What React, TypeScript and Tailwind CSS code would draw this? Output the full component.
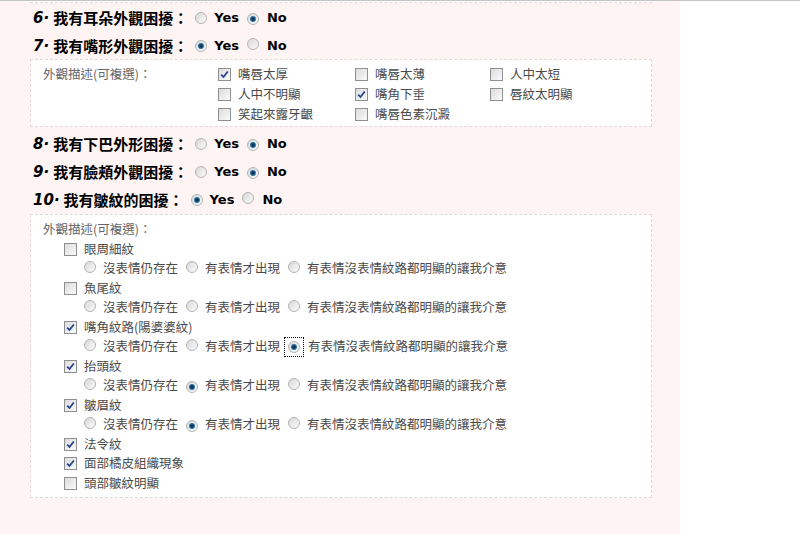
import React from "react"

const cjk = "font-['Noto_Sans_CJK_TC','Noto_Sans',sans-serif]"

function Radio({ checked = false }: { checked?: boolean }) {
    return <span className="inline-flex items-center justify-center w-[12px] h-[12px] rounded-full border border-[#b4b4b4] bg-[linear-gradient(135deg,#d8d8d8,#fbfbfb)] shrink-0">
        {checked && <span className="w-[6px] h-[6px] rounded-full bg-[radial-gradient(circle,#0c3558_25%,#3f8fc8_80%)]" />}
    </span>
}

function Check({ checked = false }: { checked?: boolean }) {
    return <span className="inline-flex items-center justify-center w-[13px] h-[13px] border border-[#8e8f8f] bg-[linear-gradient(135deg,#dcdcdc,#fafafa)] shrink-0">
        {checked && <svg width="9" height="9" viewBox="0 0 9 9">
            <path d="M1.2 4.6 L3.5 7 L7.8 1.5" fill="none" stroke="#25408f" strokeWidth="1.8" />
        </svg>}
    </span>
}

function Question({ num, text, yes }: { num: string; text: string; yes: boolean }) {
    return <div className="h-[28px] flex items-center pl-[33px] pt-[2px] text-black">
        <span className="font-['DejaVu_Sans'] italic font-bold text-[15px]">{num}·</span>
        <span className={`${cjk} font-bold text-[15px] ml-[4px]`}>{text}：</span>
        <span className="ml-[7px] flex items-center font-['DejaVu_Sans'] font-bold text-[13px]">
            <Radio checked={yes} />
            <span className="ml-[7px]">Yes</span>
            <span className="ml-[8px]"><Radio checked={!yes} /></span>
            <span className="ml-[8px]">No</span>
        </span>
    </div>
}

function CheckItem({ label, checked, tall }: { label: string; checked?: boolean; tall?: boolean }) {
    return <div className={`${tall ? "h-[20px]" : "h-[19.5px]"} flex items-center`}>
        <Check checked={checked} />
        <span className="ml-[7px]">{label}</span>
    </div>
}

const levels = ["沒表情仍存在", "有表情才出現", "有表情沒表情紋路都明顯的讓我介意"]

function Levels({ pick, focus }: { pick?: number; focus?: boolean }) {
    return <div className="h-[19.5px] flex items-center pl-[20px]">
        {levels.map((l, i) => (
            <span key={l} className="flex items-center">
                {focus && i === 2
                    ? <span className="ml-[4px] mr-[-3px] px-[3px] py-[3px] border border-dotted border-black flex"><Radio checked={pick === i} /></span>
                    : <span className={i === 0 ? "" : "ml-[8px]"}><Radio checked={pick === i} /></span>}
                <span className="ml-[7px]">{l}</span>
            </span>
        ))}
    </div>
}

export default function App() {
    return <div className="w-[800px] h-[534px] bg-white border-t border-[#c4c4c4] overflow-hidden">
        <div className={`w-[680px] h-full bg-[#fdf4f3] text-[12.5px] text-[#4a4a4a] ${cjk}`}>
            <div className="ml-[30px] w-[622px] h-[2px] bg-white border-b border-dashed border-[#e6d6d6]" />
            <Question num="6" text="我有耳朵外觀困擾" yes={false} />
            <Question num="7" text="我有嘴形外觀困擾" yes={true} />
            <div className="ml-[30px] w-[622px] bg-white border border-dashed border-[#e6d6d6] pt-[4px] pb-[2px] flex">
                <div className="w-[187px] pl-[12px] h-[20px] flex items-center text-[#666]">外觀描述(可複選)：</div>
                <div className="grid grid-cols-[137px_135px_auto]">
                    <CheckItem label="嘴唇太厚" checked tall />
                    <CheckItem label="嘴唇太薄" tall />
                    <CheckItem label="人中太短" tall />
                    <CheckItem label="人中不明顯" tall />
                    <CheckItem label="嘴角下垂" checked tall />
                    <CheckItem label="唇紋太明顯" tall />
                    <CheckItem label="笑起來露牙齦" tall />
                    <CheckItem label="嘴唇色素沉澱" tall />
                </div>
            </div>
            <div className="mt-[2px]">
                <Question num="8" text="我有下巴外形困擾" yes={false} />
                <Question num="9" text="我有臉頰外觀困擾" yes={false} />
                <Question num="10" text="我有皺紋的困擾" yes={true} />
            </div>
            <div className="mt-[1px] ml-[30px] w-[622px] bg-white border border-dashed border-[#e6d6d6] pt-[5px] pb-[4px]">
                <div className="pl-[12px] h-[19.5px] flex items-center text-[#666]">外觀描述(可複選)：</div>
                <div className="pl-[33px]">
                    <CheckItem label="眼周細紋" />
                    <Levels />
                    <CheckItem label="魚尾紋" />
                    <Levels />
                    <CheckItem label="嘴角紋路(陽婆婆紋)" checked />
                    <Levels pick={2} focus />
                    <CheckItem label="抬頭紋" checked />
                    <Levels pick={1} />
                    <CheckItem label="皺眉紋" checked />
                    <Levels pick={1} />
                    <CheckItem label="法令紋" checked />
                    <CheckItem label="面部橘皮組織現象" checked />
                    <CheckItem label="頭部皺紋明顯" />
                </div>
            </div>
        </div>
    </div>
}
